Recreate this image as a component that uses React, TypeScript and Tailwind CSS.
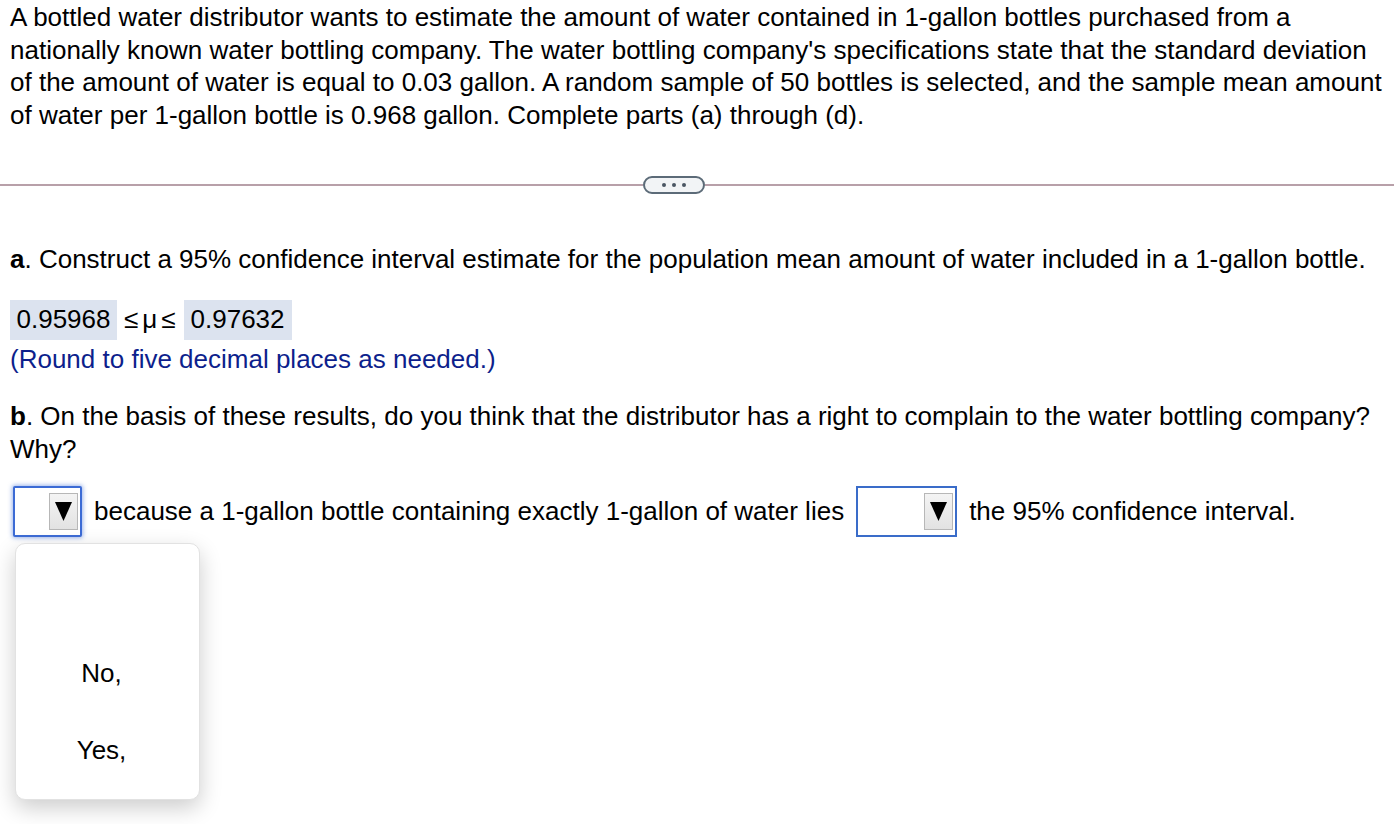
import React from 'react';

const font = "font-['Liberation_Sans',Arial,Helvetica,sans-serif]";

function SelectBox({ width, focused }: { width: string; focused?: boolean }) {
  return (
    <div
      className={`${width} h-[51px] bg-white flex items-center justify-end pr-[2px] ${
        focused
          ? 'border-[2.5px] border-[#3c6bd5] shadow-[0_0_4px_1px_rgba(60,107,213,0.5)] rounded-[2px]'
          : 'border-2 border-[#3a6cc9]'
      }`}
    >
      <div className="w-[29px] h-[37px] border border-[#b7b7b7] bg-gradient-to-b from-[#f4f4f4] to-[#e2e2e2] flex items-center justify-center">
        <svg width="17" height="21" viewBox="0 0 17 21">
          <path d="M0 1 L17 1 L8.5 20 Z" fill="#000" />
        </svg>
      </div>
    </div>
  );
}

export default function App() {
  return (
    <div className={`${font} bg-white text-black min-h-[824px] text-[26px] leading-[32.5px] relative`}>
      {/* Question text */}
      <p className="px-[10px] pt-[1px]">
        A bottled water distributor wants to estimate the amount of water contained in 1-gallon bottles purchased from a
        nationally known water bottling company. The water bottling company's specifications state that the standard deviation
        of the amount of water is equal to 0.03 gallon. A random sample of 50 bottles is selected, and the sample mean amount
        of water per 1-gallon bottle is 0.968 gallon. Complete parts (a) through (d).
      </p>

      {/* Divider */}
      <div className="mt-[44px] h-[20px] flex items-center">
        <div className="w-[643px] h-[2px] bg-[#b8a0a9]" />
        <div className="w-[62px] h-[18px] rounded-full border-2 border-[#5c6b78] bg-[#f2f4f6] flex items-center justify-center gap-[6px]">
          <span className="w-[4px] h-[4px] rounded-full bg-[#4b5563]" />
          <span className="w-[4px] h-[4px] rounded-full bg-[#4b5563]" />
          <span className="w-[4px] h-[4px] rounded-full bg-[#4b5563]" />
        </div>
        <div className="flex-1 h-[2px] bg-[#b8a0a9]" />
      </div>

      {/* Part a */}
      <div className="px-[10px] mt-[48px]">
        <p>
          <b>a</b>. Construct a 95% confidence interval estimate for the population mean amount of water included in a 1-gallon bottle.
        </p>
        <div className="mt-[24px] flex items-center">
          <span className="h-[40px] w-[107px] bg-[#dce3ef] flex items-center justify-center">0.95968</span>
          <span className="ml-[7px] mr-[8px] flex items-center gap-[4px]">
            <span>≤</span>
            <span>μ</span>
            <span>≤</span>
          </span>
          <span className="h-[40px] w-[108px] bg-[#dce3ef] flex items-center justify-center">0.97632</span>
        </div>
        <p className="mt-[3px] text-[#0d1f8c]">(Round to five decimal places as needed.)</p>
      </div>

      {/* Part b */}
      <div className="px-[10px] mt-[25px]">
        <p>
          <b>b</b>. On the basis of these results, do you think that the distributor has a right to complain to the water bottling company?
          <br />
          Why?
        </p>
        <div className="mt-[21px] flex items-center relative">
          <div className="ml-[3px]">
            <SelectBox width="w-[69px]" focused />
          </div>
          <span className="ml-[12px]">because a 1-gallon bottle containing exactly 1-gallon of water lies</span>
          <div className="ml-[12px]">
            <SelectBox width="w-[101px]" />
          </div>
          <span className="ml-[12px]">the 95% confidence interval.</span>

          {/* Open dropdown menu */}
          <div className="absolute left-[5px] top-[57px] w-[185px] h-[257px] bg-white rounded-[10px] border border-[#e2e2e2] shadow-[0_8px_22px_rgba(0,0,0,0.2)] pt-[14px] flex flex-col">
            <div className="h-[77px]" />
            <div className="h-[77px] flex items-center justify-center pr-[12px]">No,</div>
            <div className="h-[77px] flex items-center justify-center pr-[12px]">Yes,</div>
          </div>
        </div>
      </div>
    </div>
  );
}
